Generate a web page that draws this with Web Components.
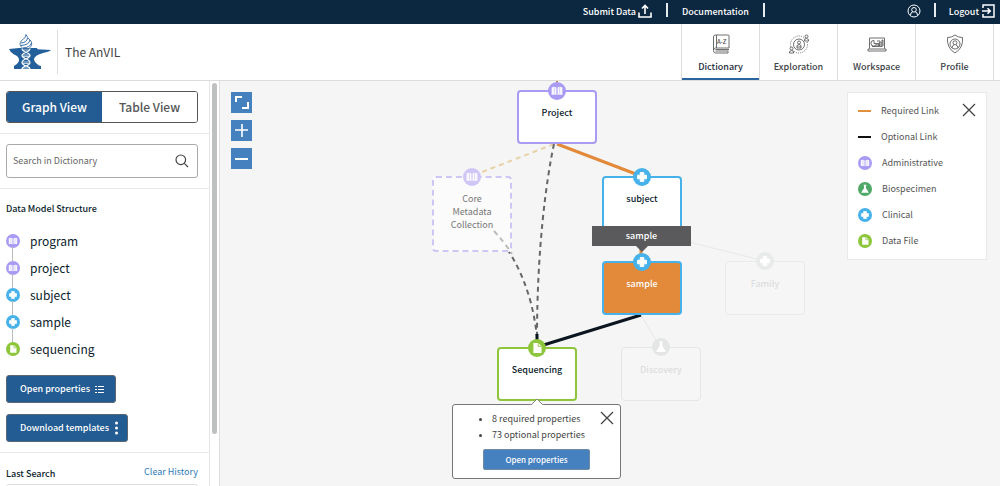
<!DOCTYPE html>
<html lang="en">
<head>
<meta charset="utf-8">
<title>The AnVIL – Dictionary</title>
<style>
  html, body { margin: 0; height: 100%; }
  body { font-family: "Noto Sans CJK SC", "Noto Sans", sans-serif; color: #0b1c2b; background: #f5f5f5; }
</style>
</head>
<body>
<anvil-app></anvil-app>
<script>
const define = (name, html, setup) => {
  const t = document.createElement('template');
  t.innerHTML = html;
  customElements.define(name, class extends HTMLElement {
    connectedCallback() {
      if (this.shadowRoot) return;
      this.attachShadow({ mode: 'open' }).append(t.content.cloneNode(true));
      if (setup) setup(this, this.shadowRoot);
    }
  });
};

const GLYPHS = {
  book: ['#a99af3', '<path d="M4 6Q7 4.500 9.400 6v8.500Q7 13 4 14.500z" fill="#fff" fill-opacity=".9"/><path d="M16 6Q13 4.500 10.600 6v8.500Q13 13 16 14.500z" fill="#fff" fill-opacity=".9"/><path d="M7.200 5.800v7M12.800 5.800v7" stroke="#a99af3" stroke-opacity=".5" stroke-width=".8"/>'],
  flask: ['#50a868', '<path d="M8 4h4v1h-.6v4l3.800 5.500q.3 1-.7 1h-9q-1 0-.7-1L8.600 9V5H8z" fill="#fff"/>'],
  plus: ['#47b2ea', '<path d="M8 5h4v3h3v4h-3v3H8v-3H5V8h3z" fill="#fff" stroke="#fff" stroke-linejoin="round"/>'],
  file: ['#8dc63a', '<path d="M6 4.500h5.500L15 8v7.500H6z" fill="#fff"/><path d="M11.300 4.500V8.200H15" fill="none" stroke="#8dc63a"/>']
};

define('type-icon', `
<style>
  :host { display: block; flex: none; width: 14px; height: 14px; }
  svg { display: block; width: 100%; height: 100%; }
</style>
<svg viewBox="0 0 20 20" aria-hidden="true"></svg>`, (el, root) => {
  const [color, glyph] = GLYPHS[el.getAttribute('type')];
  root.querySelector('svg').innerHTML = `<circle cx="10" cy="10" r="10" fill="${el.getAttribute('tint') || color}"/>${glyph}`;
});

define('close-button', `
<style>
  :host { display: block; }
  button { display: block; padding: 0; border: 0; background: none; width: 14px; height: 14px; }
  svg { display: block; }
</style>
<button aria-label="Close"><svg width="14" height="14" viewBox="0 0 14 14"><path d="M1 1l12 12M13 1L1 13" stroke="#444" stroke-width="1.300" fill="none"/></svg></button>`);

define('top-bar', `
<style>
  :host { display: flex; align-items: center; justify-content: flex-end; height: 24px; flex: none; background: #0b2840; color: #fff; font-size: 9px; line-height: 16px; font-weight: 500; padding-right: 5px; }
  a { color: inherit; text-decoration: none; display: flex; align-items: center; gap: 2px; white-space: nowrap; }
  .sep { width: 2px; height: 14px; background: #e6ebef; margin-top: -4px; }
  .links { display: flex; align-items: center; gap: 14px; }
  .user { display: flex; align-items: center; gap: 13px; margin-left: 142px; }
  svg { display: block; fill: none; stroke: #fff; margin-top: -2px; }
</style>
<nav class="links" aria-label="Site">
  <a href="#submit">Submit Data <svg width="14" height="14" viewBox="0 0 14 14"><path d="M1 8.500V13h12V8.500M7 10V2M4 4.500L7 1.500l3 3" stroke-width="1.600"/></svg></a>
  <span class="sep"></span>
  <a href="#docs">Documentation</a>
  <span class="sep"></span>
</nav>
<div class="user">
  <a href="#user" aria-label="Account"><svg width="14" height="14" viewBox="0 0 14 14"><circle cx="7" cy="7" r="6"/><circle cx="7" cy="5.800" r="2.300"/><path d="M3.500 11.300q0-3 2.300-3.500M10.500 11.300q0-3-2.300-3.500"/></svg></a>
  <span class="sep"></span>
  <a href="#logout">Logout <svg width="14" height="14" viewBox="0 0 14 14"><path d="M2 4V1h11v12H2v-3M1 7h8M6.500 4.200L9.300 7l-2.800 2.800" stroke-width="1.500"/></svg></a>
</div>`);

define('nav-tab', `
<style>
  :host { display: block; width: 78px; box-sizing: border-box; border-left: 1px solid #ddd; }
  a { display: flex; flex-direction: column; align-items: center; gap: 4px; height: 100%; box-sizing: border-box; padding-top: 10px; border-bottom: 2px solid transparent; color: #3d4248; text-decoration: none; font-size: 9px; line-height: 18px; font-weight: 500; }
  :host([active]) a { border-bottom-color: #2a659f; color: #1b2b3c; }
</style>
<a href="#"><slot name="icon"></slot><span><slot></slot></span></a>`);

define('app-header', `
<style>
  :host { display: flex; flex: none; height: 56px; background: #fff; border-bottom: 1px solid #dcdcdc; padding-right: 6px; }
  .brand { display: flex; align-items: center; padding-left: 8px; flex: 1; }
  .brand svg { display: block; }
  h1 { margin: 0 0 0 5px; padding-left: 7px; border-left: 1px solid #ddd; font-size: 12px; line-height: 44px; font-weight: 400; color: #444; }
  nav { display: flex; border-right: 1px solid #ddd; }
  nav svg { display: block; fill: none; stroke: #4a4a4a; stroke-width: .8; }
</style>
<div class="brand">
  <svg width="44" height="36" viewBox="0 0 44 36" role="img" aria-label="AnVIL logo">
    <path d="M1 15l10-1h18l.5 1.300L43 16q-1 1.500-8 3q-8 2-9 6q0 3 5 6.500l2 .5v3H6v-3q5-3 5-6q0-4-5-5.500Q2 18 1 15z" fill="#23609b"/>
    <path d="M18 .5q1 3 4 5.500q4 4-1 8.500h-6q-5-4-1.500-8Q18 4 18 .5z" fill="#fff" stroke="#23609b" stroke-width=".8"/>
    <path d="M13 9q6-.5 6.500-5M13 11.500q8-.5 9-5.500M15 14q7-.5 8.500-5" stroke="#23609b" stroke-width=".9" fill="none"/>
    <path d="M14 14.500c0 4.500 8 3.500 8 7s-8 3-8 7s8 3 8 6.500M22 14.500c0 4.500-8 3.500-8 7s8 3 8 7s-8 3-8 6.500" stroke="#fff" stroke-width="1.200" fill="none"/>
    <path d="M15 16h6M14.500 21h7M14.500 22.500h7M14.500 28h7M14.500 29.500h7M15 34h6" stroke="#fff" stroke-width=".7"/>
  </svg>
  <h1>The AnVIL</h1>
</div>
<nav aria-label="Main">
  <nav-tab active><svg slot="icon" width="20" height="20" viewBox="0 0 20 20"><path d="M4.500 1H17q1 0 1 1v12H4.500M4.500 1Q2.500 1 2.500 3v13.500Q2.500 19 4.500 19H17v-1.500M5.500 1v13M2.700 16Q2.700 14 4.500 14M4.500 15.500H18M4.500 17H17.500"/><text x="6" y="10" font-size="6" fill="#4a4a4a" stroke="none">A-Z</text></svg>Dictionary</nav-tab>
  <nav-tab><svg slot="icon" width="20" height="20" viewBox="0 0 20 20"><circle cx="10" cy="10.500" r="5.500"/><circle cx="10" cy="10.500" r="8.500" stroke-dasharray="1 1.200"/><circle cx="10" cy="8.500" r="1.500"/><path d="M8 14v-2.500q2-2 4 0V14M9 12v3M11 12v3"/><g fill="#fff"><circle cx="17.500" cy="2.500" r="1.500"/><path d="M15.500 7V5.500q2-2 4 0V7zM.5 19v-1.500q2-2 4 0V19z"/><circle cx="2.500" cy="14.500" r="1.500"/></g></svg>Exploration</nav-tab>
  <nav-tab><svg slot="icon" width="20" height="20" viewBox="0 0 20 20"><path d="M2.500 14.500V4h15v10.500M1 15h18v2H1zM5 12.500h10.500M10 12V9.500h1.500V12M12.500 12V8H14v4M15 12V6h1v6M10 7h3"/><path d="M7 6.500v3h2.500a2.800 2.800 0 1 1-2.500-3z"/></svg>Workspace</nav-tab>
  <nav-tab><svg slot="icon" width="20" height="20" viewBox="0 0 20 20"><path d="M10 1q3 2.500 7.500 2.500Q18.500 14 10 19Q1.500 14 2.500 3.500Q7 3.500 10 1z"/><circle cx="10" cy="10" r="5"/><circle cx="10" cy="8.800" r="2"/><path d="M7 14q0-2.500 2-3M13 14q0-2.500-2-3"/></svg>Profile</nav-tab>
</nav>`);

define('model-item', `
<style>
  :host { display: flex; align-items: center; gap: 10px; height: 27px; font-size: 12px; line-height: 20px; position: relative; }
  :host(:not(:last-of-type))::after { content: ""; position: absolute; left: 6px; top: 20px; width: 1px; height: 14px; background: #bbb; }
</style>
<span><slot></slot></span>`, (el, root) => {
  const icon = document.createElement('type-icon');
  icon.setAttribute('type', el.getAttribute('type'));
  root.querySelector('span').before(icon);
});

define('side-panel', `
<style>
  :host { display: flex; flex: none; width: 220px; box-sizing: border-box; border-right: 1px solid #dedede; background: #fff; overflow: hidden; }
  .content { flex: 1; min-width: 0; overflow: hidden; }
  section { padding: 10px 11px 10px 6px; border-bottom: 1px solid #e8e8e8; }
  .toggle { display: flex; box-sizing: border-box; border: 1px solid #555; border-radius: 3px; overflow: hidden; height: 32px; }
  .toggle button { flex: 1; border: 0; padding: 0; background: #fff; color: #555; font: 500 12px/20px "Noto Sans CJK SC", sans-serif; }
  .toggle button[aria-pressed=true] { background: #235c92; color: #fff; }
  .search { display: flex; align-items: center; box-sizing: border-box; border: 1px solid #aaa; border-radius: 3px; height: 34px; padding: 0 8px 0 6px; }
  input { flex: 1; min-width: 0; border: 0; outline: 0; padding: 0; background: none; font: 400 9px/18px "Noto Sans CJK SC", sans-serif; }
  input::placeholder { color: #666; opacity: 1; }
  h2 { margin: 0; font-size: 9px; line-height: 20px; font-weight: 500; }
  .list { margin: 8px 0 13px; }
  .actions { display: flex; flex-direction: column; align-items: flex-start; gap: 11px; }
  .actions button { display: flex; align-items: center; gap: 5px; height: 28px; border: 1px solid #5b6672; border-radius: 3px; background: #235c92; color: #fff; padding: 0 11px 0 13px; font: 500 9px/18px "Noto Sans CJK SC", sans-serif; white-space: nowrap; }
  .actions button + button { padding-right: 8px; }
  .row { display: flex; justify-content: space-between; }
  .row a { color: #2f7ab8; text-decoration: none; font-size: 9px; line-height: 18px; }
  .row h2 { padding-top: 1px; }
  .results { height: 30px; border: 1px solid #ddd; border-radius: 3px; }
  .track { flex: none; width: 5px; padding: 2px 2px 0; border-left: 1px solid #e6e6e6; }
  .thumb { height: 87%; border-radius: 3px; background: #bfc0c0; }
</style>
<div class="content">
  <section><div class="toggle"><button aria-pressed="true">Graph View</button><button aria-pressed="false">Table View</button></div></section>
  <section><div class="search"><input type="search" placeholder="Search in Dictionary" aria-label="Search in Dictionary"><svg width="14" height="14" viewBox="0 0 14 14" fill="none" stroke="#444" stroke-width="1.200"><circle cx="5.800" cy="5.800" r="4.800"/><path d="M9.300 9.300L13 13"/></svg></div></section>
  <section class="model">
    <h2>Data Model Structure</h2>
    <div class="list">
      <model-item type="book">program</model-item>
      <model-item type="book">project</model-item>
      <model-item type="plus">subject</model-item>
      <model-item type="plus">sample</model-item>
      <model-item type="file">sequencing</model-item>
    </div>
    <div class="actions">
      <button>Open properties <svg width="9" height="9" viewBox="0 0 9 9" stroke="#fff"><path d="M0 1.500h2M3 1.500h6M0 4.500h2M3 4.500h6M0 7.500h2M3 7.500h6"/></svg></button>
      <button>Download templates <svg width="5" height="14" viewBox="0 0 5 14" fill="#fff"><circle cx="2.500" cy="2" r="1.500"/><circle cx="2.500" cy="7" r="1.500"/><circle cx="2.500" cy="12" r="1.500"/></svg></button>
    </div>
  </section>
  <section class="last">
    <div class="row"><h2>Last Search</h2><a href="#clear">Clear History</a></div>
    <div class="results"></div>
  </section>
</div>
<div class="track"><div class="thumb"></div></div>`);

define('graph-node', `
<style>
  :host { position: absolute; box-sizing: border-box; width: 80px; height: 54px; border: 2px solid var(--line); border-radius: 4px; background: #fff; padding: 13px 8px 0; text-align: center; font-size: 9px; line-height: 16px; font-weight: 500; }
  :host([line-style=dashed]) { height: 76px; border-style: dashed; background: #fbfbfb; color: #777; line-height: 13px; padding-top: 14px; font-weight: 400; }
  :host([muted]) { background: #f6f6f6; color: #dcdddd; border-width: 1px; padding-top: 14px; }
  :host([selected]) { background: #e2893a; color: #fff; }
  .badge { position: absolute; top: -10px; left: 0; right: 0; display: flex; justify-content: center; }
  type-icon { width: 18px; height: 18px; }
</style>
<div class="badge"></div><slot></slot>`, (el, root) => {
  const icon = document.createElement('type-icon');
  icon.setAttribute('type', el.getAttribute('type'));
  if (el.getAttribute('tint')) icon.setAttribute('tint', el.getAttribute('tint'));
  root.querySelector('.badge').append(icon);
  el.style.setProperty('--line', el.getAttribute('tint') || GLYPHS[el.getAttribute('type')][0]);
});

define('zoom-controls', `
<style>
  :host { display: flex; flex-direction: column; gap: 7px; }
  button { display: block; padding: 0; width: 21px; height: 21px; border: 0; background: #4580bf; }
  svg { display: block; fill: none; stroke: #fff; stroke-width: 2; }
</style>
<button aria-label="Reset"><svg width="21" height="21" viewBox="0 0 21 21"><path d="M5 10V5h6M11 16h6v-6"/></svg></button>
<button aria-label="Zoom in"><svg width="21" height="21" viewBox="0 0 21 21"><path d="M4 10h13M11 4v13" stroke-width="1.600"/></svg></button>
<button aria-label="Zoom out"><svg width="21" height="21" viewBox="0 0 21 21"><path d="M4 11h13"/></svg></button>`);

define('graph-legend', `
<style>
  :host { display: flex; align-items: flex-start; justify-content: space-between; box-sizing: border-box; width: 140px; padding: 5px 10px; background: #fff; border: 1px solid #e9e9e9; color: #555; font-size: 9px; line-height: 26px; }
  ul { list-style: none; margin: 0; padding: 0; }
  li { display: flex; align-items: center; gap: 10px; height: 26px; white-space: nowrap; }
  i { width: 13px; height: 2px; background: #e0913f; }
  i.optional { background: #111; }
  close-button { margin-top: 5px; }
</style>
<ul>
  <li><i></i>Required Link</li>
  <li><i class="optional"></i>Optional Link</li>
  <li><type-icon type="book"></type-icon>Administrative</li>
  <li><type-icon type="flask"></type-icon>Biospecimen</li>
  <li><type-icon type="plus"></type-icon>Clinical</li>
  <li><type-icon type="file"></type-icon>Data File</li>
</ul>
<close-button></close-button>`);

define('node-popup', `
<style>
  :host { display: block; box-sizing: border-box; width: 169px; height: 75px; border: 1px solid #777; border-radius: 3px; background: #fff; color: #444; }
  .arrow { position: absolute; top: -7px; left: 77px; }
  ul { margin: 6px 0 0; padding-left: 39px; font-size: 9px; line-height: 16px; }
  close-button { position: absolute; top: 6px; right: 6px; }
  .open { display: block; margin: 6px auto 0; width: 107px; height: 21px; padding: 0; border: 1px solid #6f8aa5; border-radius: 2px; background: #4580bf; color: #fff; font: 500 8px/16px "Noto Sans CJK SC", sans-serif; }
</style>
<svg class="arrow" width="14" height="8" viewBox="0 0 14 8"><path d="M1 7.500L7 1l6 6.500V8H1z" fill="#fff"/><path d="M0 6.500h1.500L7 1l5.500 5.500H14" fill="none" stroke="#888"/></svg>
<ul><li>8 required properties</li><li>73 optional properties</li></ul>
<close-button></close-button>
<button class="open">Open properties</button>`);

define('graph-tooltip', `
<style>
  :host { display: block; width: 99px; background: #5a5a5c; color: #fff; text-align: center; font-size: 9px; line-height: 20px; font-weight: 500; }
  :host::after { content: ""; position: absolute; top: 100%; left: 44px; border: 6px solid transparent; border-top-color: #5a5a5c; border-bottom: 0; }
</style>
<slot></slot>`);

define('graph-canvas', `
<style>
  :host { display: block; position: relative; flex: 1; min-width: 0; overflow: hidden; background: #f5f5f5; }
  .edges { position: absolute; inset: 0; width: 100%; height: 100%; fill: none; }
  zoom-controls { position: absolute; left: 11px; top: 11px; }
  graph-legend { position: absolute; right: 13px; top: 11px; }
  #project { left: 297px; top: 9px; }
  #core { left: 212px; top: 95px; }
  #subject { left: 382px; top: 95px; }
  #sample { left: 382px; top: 180px; }
  #family { left: 505px; top: 180px; }
  #discovery { left: 401px; top: 266px; }
  #sequencing { left: 277px; top: 266px; }
  graph-tooltip { position: absolute; left: 372px; top: 145px; }
  node-popup { position: absolute; left: 232px; top: 323px; }
</style>
<svg class="edges" aria-hidden="true">
  <path d="M421 149L545 180M421 234L440 266" stroke="#e6e7e7"/>
  <path d="M334 63L252 95" stroke="#e7d1a6" stroke-width="2" stroke-dasharray="5 4"/>
  <path d="M337 0v4" stroke="#c98a4a" stroke-width="2"/>
  <path d="M334 63C326 100 317 170 317 256" stroke="#666" stroke-width="2" stroke-dasharray="5 4"/>
  <path d="M271 147Q310 190 317 256" stroke="#666" stroke-width="2" stroke-dasharray="5 4"/>
  <path d="M337 63L421 95M421 165v10" stroke="#e2893a" stroke-width="3"/>
  <path d="M421 234L317 266M317 253v8" stroke="#0b1520" stroke-width="3"/>
</svg>
<graph-node id="project" type="book">Project</graph-node>
<graph-node id="core" type="book" line-style="dashed" tint="#cfc6f6">Core<br>Metadata<br>Collection</graph-node>
<svg class="edges" aria-hidden="true"><path d="M274 150Q285 162 292 173" stroke="#bbb" stroke-width="2" stroke-dasharray="5 4"/></svg>
<graph-node id="subject" type="plus">subject</graph-node>
<graph-node id="sample" type="plus" selected>sample</graph-node>
<graph-node id="family" type="plus" muted tint="#e9eaea">Family</graph-node>
<graph-node id="discovery" type="flask" muted tint="#e4e5e5">Discovery</graph-node>
<graph-node id="sequencing" type="file">Sequencing</graph-node>
<graph-tooltip>sample</graph-tooltip>
<node-popup></node-popup>
<zoom-controls></zoom-controls>
<graph-legend></graph-legend>`);

define('anvil-app', `
<style>
  :host { display: flex; flex-direction: column; height: 100vh; }
  main { display: flex; flex: 1; min-height: 0; }
</style>
<top-bar></top-bar>
<app-header></app-header>
<main><side-panel></side-panel><graph-canvas></graph-canvas></main>`);

// The outer rule in side-panel sets the item gap nowhere else, so every list row keeps the gap of model-item.
</script>
</body>
</html>
